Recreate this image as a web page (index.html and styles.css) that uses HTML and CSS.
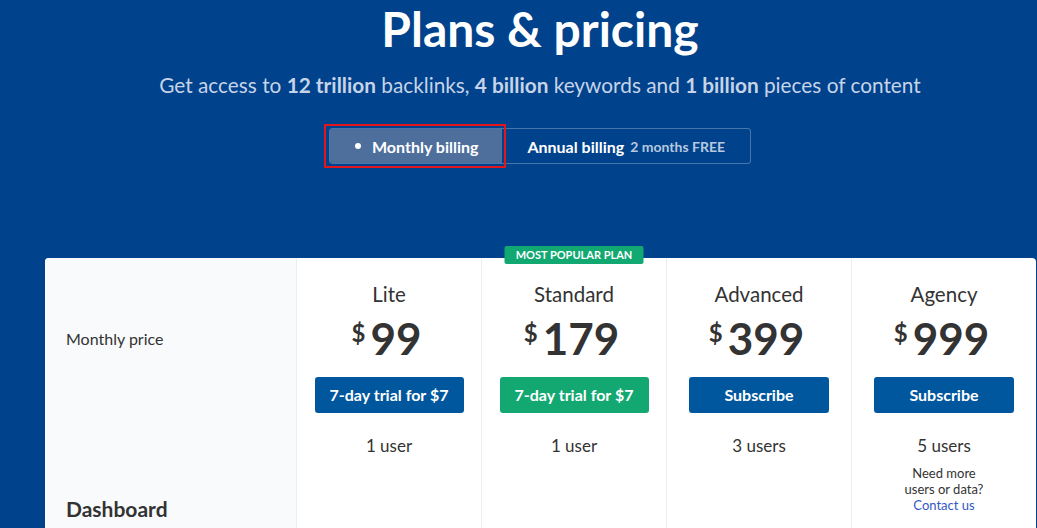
FILE: index.html
```html
<!DOCTYPE html>
<html lang="en">
<head>
<meta charset="utf-8">
<title>Plans &amp; pricing</title>
<link rel="stylesheet" href="styles.css">
</head>
<body>
<div class="page">
  <header class="hero">
    <h1 class="title">Plans &amp; pricing</h1>
    <p class="subtitle">Get access to <b>12 trillion</b> backlinks, <b>4 billion</b> keywords and <b>1 billion</b> pieces of content</p>
    <div class="toggle">
      <button class="seg seg-active"><span class="dot"></span>Monthly billing<span class="focus-ring"></span></button>
      <button class="seg">Annual billing <span class="free">2 months FREE</span></button>
    </div>
  </header>

  <section class="card">
    <div class="labels">
      <div class="label-price">Monthly price</div>
      <div class="label-section">Dashboard</div>
    </div>

    <div class="plan">
      <div class="plan-name">Lite</div>
      <div class="price"><span class="cur">$</span><span class="amount">99</span></div>
      <a class="btn btn-blue btn-trial">7-day trial for $7</a>
      <div class="users">1 user</div>
    </div>

    <div class="plan">
      <span class="badge">MOST POPULAR PLAN</span>
      <div class="plan-name">Standard</div>
      <div class="price"><span class="cur">$</span><span class="amount">179</span></div>
      <a class="btn btn-green btn-trial">7-day trial for $7</a>
      <div class="users">1 user</div>
    </div>

    <div class="plan">
      <div class="plan-name">Advanced</div>
      <div class="price"><span class="cur">$</span><span class="amount">399</span></div>
      <a class="btn btn-blue btn-sub">Subscribe</a>
      <div class="users">3 users</div>
    </div>

    <div class="plan">
      <div class="plan-name">Agency</div>
      <div class="price"><span class="cur">$</span><span class="amount">999</span></div>
      <a class="btn btn-blue btn-sub">Subscribe</a>
      <div class="users">5 users</div>
      <p class="more">Need more<br>users or data?<br><a class="contact">Contact us</a></p>
    </div>
  </section>
</div>
</body>
</html>
```

FILE: styles.css
```css
html, body {
  margin: 0;
  padding: 0;
  overflow: hidden;
}

body {
  background: #00428c;
  font-family: Lato, "Open Sans", "Liberation Sans", sans-serif;
  color: #333;
}

.page {
  width: 1080px;
}

.hero {
  display: flex;
  flex-direction: column;
  align-items: center;
  color: #fff;
}

.title {
  margin: 0;
  font-size: 48px;
  line-height: 57px;
  font-weight: 700;
}

.subtitle {
  margin: 14px 0 0;
  font-size: 20.8px;
  line-height: 28px;
  color: #c6d4e8;
}

.subtitle b {
  font-weight: 700;
}

.toggle {
  margin-top: 29px;
  display: flex;
  border: 1px solid rgba(255, 255, 255, 0.28);
  border-radius: 3px;
}

.seg {
  position: relative;
  display: flex;
  align-items: center;
  height: 34px;
  padding: 0 25px;
  border: 0;
  background: transparent;
  color: #fff;
  font-family: inherit;
  font-size: 16px;
  font-weight: 700;
}

.seg-active {
  background: #4e6f9c;
  border-radius: 2px 0 0 2px;
  padding-right: 24px;
}

.dot {
  width: 6px;
  height: 6px;
  border-radius: 50%;
  background: #fff;
  margin-right: 11px;
}

.focus-ring {
  position: absolute;
  left: -6px;
  top: -5px;
  width: 182px;
  height: 44px;
  box-sizing: border-box;
  border: 2px solid #e3161e;
}

.free {
  margin-left: 6px;
  font-size: 14px;
  font-weight: 700;
  color: #b7c8df;
}

.card {
  margin: 94px 0 0 45px;
  width: 991px;
  height: 300px;
  background: #fff;
  border-radius: 4px 4px 0 0;
  display: grid;
  grid-template-columns: 251px repeat(4, 185px);
}

.labels {
  background: #f9fafc;
  border-radius: 4px 0 0 0;
  padding: 0 21px;
  display: flex;
  flex-direction: column;
}

.label-price {
  margin-top: 71px;
  font-size: 16px;
  line-height: 20px;
}

.label-section {
  margin-top: 148px;
  font-size: 21px;
  line-height: 24px;
  font-weight: 700;
}

.plan {
  position: relative;
  box-sizing: border-box;
  border-left: 1px solid #eceef1;
  padding-top: 23px;
  display: flex;
  flex-direction: column;
  align-items: center;
}

.badge {
  position: absolute;
  top: -12px;
  left: 50%;
  transform: translateX(-50%);
  width: 139px;
  height: 18px;
  line-height: 18px;
  text-align: center;
  background: #12a872;
  color: #fff;
  font-size: 11px;
  font-weight: 700;
  border-radius: 2px;
  white-space: nowrap;
}

.plan-name {
  font-size: 20.5px;
  line-height: 26px;
}

.price {
  margin-top: 4px;
  height: 56px;
  padding-right: 5px;
  display: flex;
  align-items: flex-start;
}

.cur {
  font-size: 24px;
  line-height: 26px;
  font-weight: 700;
  margin-top: 9px;
  margin-right: 5px;
}

.amount {
  font-size: 44px;
  line-height: 54px;
  font-weight: 700;
}

.btn {
  margin-top: 10px;
  height: 36px;
  line-height: 35px;
  border-radius: 3px;
  color: #fff;
  font-size: 16px;
  font-weight: 700;
  text-align: center;
}

.btn-trial {
  width: 149px;
}

.btn-sub {
  width: 140px;
}

.btn-blue {
  background: #00579e;
}

.btn-green {
  background: #13a872;
}

.users {
  margin-top: 22px;
  font-size: 17px;
  line-height: 22px;
}

.more {
  margin: 8px 0 0;
  font-size: 13px;
  line-height: 16px;
  text-align: center;
}

.contact {
  color: #3457c4;
}
```
